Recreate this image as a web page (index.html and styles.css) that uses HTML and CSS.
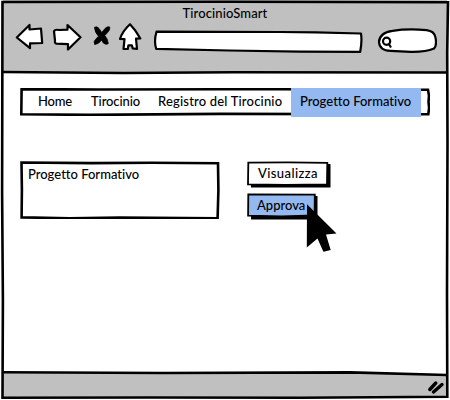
FILE: index.html
```html
<!DOCTYPE html>
<html lang="it">
<head>
<meta charset="utf-8">
<title>TirocinioSmart</title>
<link rel="stylesheet" href="styles.css">
</head>
<body>
<div class="browser">
  <header class="chrome">
    <h1 class="title">TirocinioSmart</h1>
    <div class="toolbar">
      <svg class="icon back" width="30" height="28" viewBox="15 23 30 28"><path d="M16.800 37.500 29.500 25v4.500l11.500-1 1.200 14.500-12.200.4v4.800Z"/></svg>
      <svg class="icon forward" width="30" height="28" viewBox="52 23 30 28"><path d="M54 31.200q1-2 5-1.200l8.500-.3V25L80.500 37.200 68 49.500v-5.300l-11.500-.5q-2-.3-1.500-3Z"/></svg>
      <svg class="icon stop" width="18" height="22" viewBox="93 25 18 22"><path d="M94.500 27.200q3-1.500 5 2l2.300 3.300 3.200-4q2-2.400 4.800-1.500.4 3-2.200 5.500l-2.800 3q3 3.300 3.500 8-2.300 2-5-.6l-1.800-2.800q-3 4.300-6.800 4.400-1.500-3 .8-5l3-3.300q-3.700-3.500-4-9Z"/></svg>
      <svg class="icon home" width="24" height="28" viewBox="118 23 24 28"><path d="M130 24.200q5.500 5.500 10.300 14.300l-4.300.2 1 10.300-4.300-.6-.8-3h-3.500l-.6 3.600h-4.300l1-9.800-4.500-.2q2.500-8 10-14.800Z"/></svg>
      <svg class="address" width="210" height="26" viewBox="153 28 210 26"><path d="M156.500 31.700 280 32l36 .3 45 1.200q1.200 8-.8 18.300l-61-.1-70-1.200-73-1.700q-2.500-7.500.3-17.100Z"/></svg>
      <svg class="search" width="60" height="26" viewBox="377 28 60 26"><path d="M379 42q.5-9.500 13.500-11.200 15-2.300 34-.7 8 .9 9 7.500 1.500 8-1.500 11-8 3.500-23 3.300l-20.500-1Q379.500 50.500 379 42Z"/><circle cx="386.600" cy="41.200" r="3.600"/><path d="m388.500 43.500 2.500 4"/></svg>
    </div>
  </header>
  <main class="page">
    <nav class="menu">
      <svg class="sketch" viewBox="20 88 410 28"><path class="fill" d="M22 90h405v24H22Z"/><path class="line" d="M21.600 89.100 100 89.500l120-.2 60-.1 148 .6 1 6-.5 6 .6 6-.8 6.500-208-.4L90 114.900l-68.700-.6Z"/></svg>
      <a class="item home-link">Home</a>
      <a class="item traineeship">Tirocinio</a>
      <a class="item register">Registro del Tirocinio</a>
      <a class="item active">Progetto Formativo</a>
    </nav>
    <div class="content">
      <section class="document">
        <svg class="sketch" viewBox="20 161 200 58"><path class="fill" d="M21 162h197v55H21Z"/><path class="line" d="m21.500 162.500 70 .6 60-.4 66.500.6.4 27-.8 28-98-.7-50 .6-48-.8.3-28Z"/></svg>
        <span class="document-name">Progetto Formativo</span>
      </section>
      <div class="actions">
        <button class="button view">
          <svg class="sketch" viewBox="247 161 84 27"><path d="M251 164h79.500v23.500H251Z"/><path class="fill line-thin" d="m248.300 162.700 40-.3 39 .5-.3 21.500-41 .6-38-.6Z"/></svg>
          <span class="view-text">Visualizza</span>
        </button>
        <button class="button approve">
          <svg class="sketch" viewBox="247 193 71 27"><path d="M251 196h66.500v23.500H251Z"/><path class="fill-blue line-thin" d="m248.300 194.300 66.500.4-.2 20.800-33 .8-33.500-.6Z"/></svg>
          <span class="approve-text">Approva</span>
          <svg class="cursor" width="34" height="50" viewBox="304 203 34 50"><path d="m307 204.300 29.500 29.300-10.500.9 4.700 15.500-7.300 1.800-5.900-13.300-10.700 9Z"/></svg>
        </button>
      </div>
    </div>
  </main>
  <svg class="frame" width="450" height="400" viewBox="0 0 450 400"><path class="footer-fill" d="m3 372.300 160 .7 187-.6 97 2.600v23H3Z"/><path class="window-line" d="M2.500 2 225 1.800l223 .4-.8 50 .3 90-.5 150 .3 104.500L300 397.800l-150-.3-147.500.3.400-98-.8-107 .2-100Z"/><path class="window-line" d="m3 72 120 1 110-.8 214 .3M3 372.300l160 .7 187-.6 97 2.600"/><path class="grip" d="m429.800 389.500 6-6.500m-2.300 9 8.500-7.500"/></svg>
</div>
</body>
</html>
```
FILE: styles.css
```css
* { box-sizing: border-box; }

body {
  margin: 0;
  width: 450px;
  height: 400px;
  overflow: hidden;
  background: #fff;
  color: #000;
  font: 500 13px/16px Lato, "Open Sans", sans-serif;
  font-variant-ligatures: none;
}

.browser {
  position: relative;
  width: 450px;
  height: 400px;
  overflow: hidden;
}

.chrome {
  height: 72px;
  margin: 0 3px;
  padding-top: 5px;
  background: #c0c0c0;
}

.title {
  margin: 0;
  font: inherit;
  text-align: center;
  letter-spacing: .1px;
}

.toolbar {
  display: flex;
  align-items: flex-start;
  height: 32px;
  margin-top: 1px;
  padding-left: 12px;
}

.toolbar svg {
  flex: none;
  fill: #fff;
  stroke: #000;
  stroke-width: 2.2;
  stroke-linejoin: round;
}

.icon { margin-top: 1px; }
.forward { margin-left: 7px; }
.toolbar .stop { margin: 3px 0 0 11px; fill: #000; stroke-width: .8; }
.home { margin-left: 7px; }
.address { margin: 6px 0 0 11px; }
.search { margin: 6px 0 0 14px; }

.page { padding: 16px 20px 0; }

.sketch {
  position: absolute;
  inset: 0;
  width: 100%;
  height: 100%;
  z-index: -1;
}

.fill { fill: #fff; }
.fill-blue { fill: #94b9f0; }
.line { fill: none; stroke: #000; stroke-width: 2.6; }
.line-thin { stroke: #000; stroke-width: 1.8; }

.menu {
  position: relative;
  z-index: 0;
  display: flex;
  width: 410px;
  height: 28px;
  padding-left: 18px;
}

.item {
  height: 29px;
  padding-top: 5px;
  white-space: nowrap;
}

.home-link { width: 53px; letter-spacing: -.2px; }
.traineeship { width: 67px; letter-spacing: -.1px; }
.register { width: 133px; letter-spacing: .18px; }

.active {
  width: 130px;
  padding-left: 9px;
  background: #94b9f0;
}

.content {
  display: flex;
  gap: 27px;
  margin-top: 45px;
}

.document {
  position: relative;
  z-index: 0;
  width: 200px;
  height: 58px;
  padding: 5px 8px;
}

.actions {
  display: flex;
  flex-direction: column;
  align-items: flex-start;
  gap: 5px;
}

.button {
  position: relative;
  z-index: 0;
  height: 27px;
  padding: 0 0 4px 11px;
  border: 0;
  background: none;
  color: inherit;
  font: inherit;
  text-align: left;
}

.button span { display: block; white-space: nowrap; }
.view { width: 84px; letter-spacing: .4px; }
.approve { width: 71px; padding-left: 10px; }

.cursor {
  position: absolute;
  left: 57px;
  top: 10px;
}

.frame {
  position: absolute;
  inset: 0;
  pointer-events: none;
}

.footer-fill { fill: #c0c0c0; }
.window-line { fill: none; stroke: #000; stroke-width: 2.6; }
.grip { stroke: #000; stroke-width: 3.4; stroke-linecap: round; }
```
